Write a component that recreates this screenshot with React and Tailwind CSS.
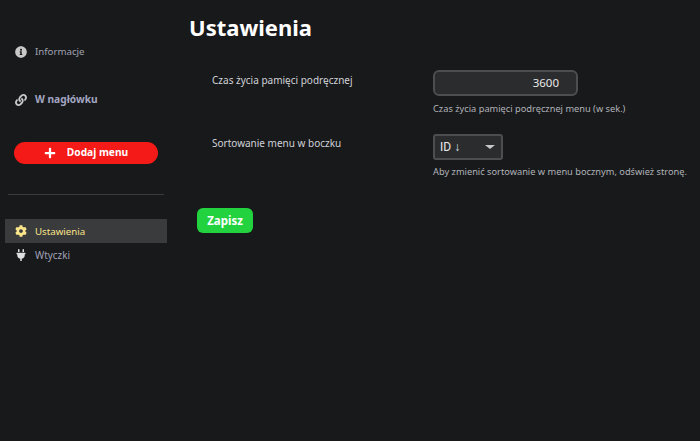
import { FaInfoCircle, FaLink, FaPlus, FaCog, FaPlug } from "react-icons/fa";

const App = () => {
  return (
    <div className="flex h-[441px] w-[700px] overflow-hidden bg-[#18191b] font-['Noto_Sans',sans-serif]">
      {/* Sidebar */}
      <div className="flex w-[167px] shrink-0 flex-col pl-[5px]">
        <div className="mt-[43px] flex h-[18px] items-center pl-[10px] text-[9.7px] text-[#a0a2b0]">
          <FaInfoCircle className="mr-[8px] h-[12px] w-[12px] text-[#c8c8c8]" />
          Informacje
        </div>
        <div className="mt-[30px] flex h-[18px] items-center pl-[10px] text-[10.2px] font-bold text-[#a3a6c2]">
          <FaLink className="mr-[8px] h-[12px] w-[12px] text-[#c8c8c8]" />
          W nagłówku
        </div>
        <button className="mt-[33px] ml-[9px] flex h-[22px] w-[144px] items-center justify-center rounded-full bg-[#f31a17] pl-[1px] text-[10.2px] font-bold text-white">
          <FaPlus className="mr-[11px] h-[12px] w-[12px]" />
          <span className="mr-[1px]">Dodaj menu</span>
        </button>
        <div className="mt-[30px] ml-[3px] mr-[3px] h-px bg-[#3a3b3d]" />
        <div className="mt-[24px] flex h-[24px] items-center bg-[#3a3b3d] pl-[10px] text-[9.7px] text-[#fbe58a]">
          <FaCog className="mr-[8px] h-[12px] w-[12px] text-[#fbe58a]" />
          <span className="pt-[2px]">Ustawienia</span>
        </div>
        <div className="flex h-[24px] items-center pl-[10px] text-[9.9px] text-[#a0a2b8]">
          <FaPlug className="mr-[8px] h-[12px] w-[12px] text-[#e0e0e0]" />
          <span className="pt-[1px]">Wtyczki</span>
        </div>
      </div>

      {/* Main */}
      <div className="flex-1 pl-[22px]">
        <h1 className="mt-[10px] h-[34px] text-[22px] leading-[34px] font-bold text-white">Ustawienia</h1>

        <div className="mt-[26px] flex pl-[23px]">
          <div className="w-[221px] pt-[2px] text-[10px] leading-[16px] text-[#d0d2d8]">Czas życia pamięci podręcznej</div>
          <div>
            <div className="flex h-[26px] w-[145px] items-center justify-end rounded-[6px] border-2 border-[#4d4e50] bg-[#2b2c2e] pr-[17px] text-[11.5px] text-[#e8e8e8]">
              3600
            </div>
            <div className="mt-[6px] text-[9.25px] leading-[14px] text-[#b0b2b8]">Czas życia pamięci podręcznej menu (w sek.)</div>
          </div>
        </div>

        <div className="mt-[18px] flex pl-[23px]">
          <div className="w-[221px] pt-[1px] text-[10px] leading-[16px] text-[#d0d2d8]">Sortowanie menu w boczku</div>
          <div>
            <div className="relative flex h-[26px] w-[70px] items-center rounded-[3px] border-2 border-[#4d4e50] bg-[#2b2c2e] pl-[5px] font-['Roboto',sans-serif] text-[12px] text-[#e8e8e8]">
              ID <span className="ml-[3px] font-bold text-[#dde3f5]">↓</span>
              <span className="absolute top-[9px] right-[6px] h-0 w-0 border-x-[5px] border-t-[4px] border-x-transparent border-t-[#c8c8c8]" />
            </div>
            <div className="mt-[5px] whitespace-nowrap text-[9.25px] leading-[14px] text-[#b0b2b8]">Aby zmienić sortowanie w menu bocznym, odśwież stronę.</div>
          </div>
        </div>

        <button className="mt-[29px] ml-[8px] flex h-[25px] w-[56px] items-center justify-center rounded-[6px] bg-[#22d33f] text-[11.5px] font-bold text-white">
          Zapisz
        </button>
      </div>
    </div>
  );
};

export default App;
